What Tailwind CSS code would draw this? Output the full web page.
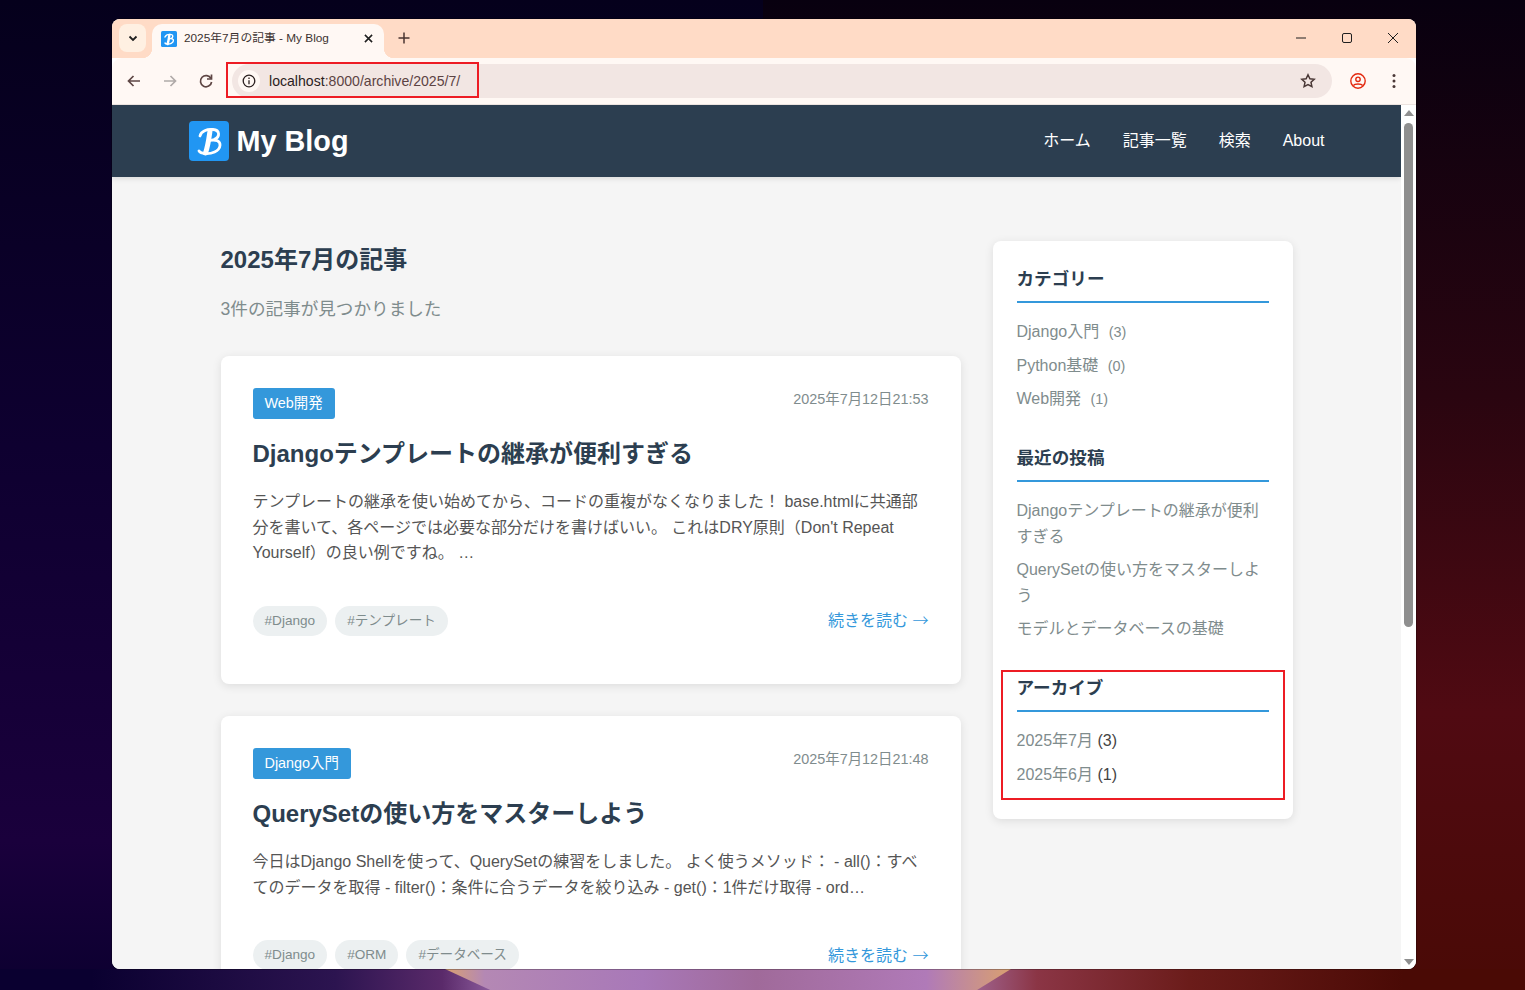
<!DOCTYPE html>
<html lang="ja">
  <head>
    <meta charset="utf-8" />
    <title>2025年7月の記事 - My Blog</title>
    <script src="https://cdn.jsdelivr.net/npm/@tailwindcss/browser@4"></script>
  </head>
  <body class="relative h-[990px] overflow-hidden bg-[#0a0020] font-['Liberation_Sans','Noto_Sans_CJK_JP',sans-serif]">
    <!-- Desktop wallpaper -->
    <div class="absolute inset-0 flex">
      <div class="w-1/2 bg-[linear-gradient(180deg,#05001c_0%,#0e0030_45%,#1a003c_85%,#0c0030_100%)]"></div>
      <div class="w-1/2 bg-[linear-gradient(180deg,#08000f_0%,#2a0510_40%,#500a12_72%,#4a0a06_100%)]"></div>
    </div>
    <div class="absolute left-0 right-0 top-[969px] h-[21px] bg-[linear-gradient(90deg,#0a0030_6%,#2c1450_22%,#5a2a6a_29%,#a878b8_34%,#a878b0_62%,#8b3545_68%,#6b1c1a_78%,#4a0a05_92%)]"></div>
    <div class="absolute left-[445px] top-[969px] h-[21px] w-[566px] bg-[linear-gradient(90deg,#d9a070_0%,#b488b4_7%,#a878b8_35%,#a06a9a_55%,#b07ab8_85%,#d9a070_100%)] [clip-path:polygon(0_0,100%_0,94%_100%,8%_100%)]"></div>

    <!-- Browser window -->
    <div class="relative ml-[112px] flex h-[969px] w-[1304px] flex-col pt-[19px]">
      <div class="flex h-[950px] flex-col overflow-hidden rounded-lg bg-white shadow-[0_0_0_1px_rgba(0,0,0,0.25)]">
        <!-- Tab strip -->
        <div class="relative flex h-[39px] shrink-0 items-end bg-[#ffdbc6] pl-[7px] text-[#1f1f1f]">
          <button class="mb-[6px] flex h-[28px] w-[27px] items-center justify-center rounded-lg bg-[#fff0e2]">
            <svg class="h-3 w-3" viewBox="0 0 12 12" fill="none" stroke="#1f1f1f" stroke-width="1.8"><path d="M2.5 4.5 6 8l3.500-3.500" /></svg>
          </button>
          <div class="relative ml-[6px] flex h-[34px] w-[232px] items-center rounded-t-[10px] bg-[#fff8f4] pb-[4px] pl-[9px]">
            <div class="absolute -left-[10px] bottom-0 h-[10px] w-[10px] bg-[radial-gradient(circle_at_0_0,transparent_10px,#fff8f4_10.5px)]"></div>
            <div class="absolute -right-[10px] bottom-0 h-[10px] w-[10px] bg-[radial-gradient(circle_at_100%_0,transparent_10px,#fff8f4_10.5px)]"></div>
            <svg class="h-4 w-4 shrink-0" viewBox="0 0 40 40">
              <rect width="40" height="40" rx="4" fill="#2196f3" />
              <path d="M10 15C12 10 18 8 24 8.500c7 .500 7.500 7.500 1 10-3 1-5 1-5 1 7-1.500 11.500.500 11 5-.500 6-9 8.500-15 8-2.500-.200-5-1-6-2.500" fill="none" stroke="#fff" stroke-width="3.600" stroke-linecap="round" />
              <path d="M21 10c-1 7-2 15-4.500 22.500" fill="none" stroke="#fff" stroke-width="6" stroke-linecap="round" />
            </svg>
            <span class="ml-[7px] whitespace-nowrap text-[11.8px] text-[#3c3230]">2025年7月の記事 - My Blog</span>
            <svg class="absolute right-[11px] top-[10px] h-[9px] w-[9px]" viewBox="0 0 10 10" stroke="#1f1f1f" stroke-width="1.7"><path d="M1 1l8 8M9 1 1 9" /></svg>
          </div>
          <svg class="mb-[14px] ml-[14px] h-3 w-3" viewBox="0 0 12 12" stroke="#4a3530" stroke-width="1.5"><path d="M6 .5v11M.5 6h11" /></svg>
          <!-- Window controls -->
          <div class="absolute right-[18px] top-[14px] flex items-center gap-[36px]">
            <svg class="h-[10px] w-[10px]" viewBox="0 0 10 10" stroke="#1f1f1f"><path d="M0 5h10" /></svg>
            <svg class="h-[10px] w-[10px]" viewBox="0 0 10 10" fill="none" stroke="#1f1f1f"><rect x=".5" y=".5" width="9" height="9" rx="1.500" /></svg>
            <svg class="h-[10px] w-[10px]" viewBox="0 0 10 10" stroke="#1f1f1f"><path d="M0 0l10 10M10 0 0 10" /></svg>
          </div>
        </div>

        <!-- Toolbar -->
        <div class="relative z-10 flex h-[47px] shrink-0 items-center rounded-t-[10px] border-b border-[#ece3df] bg-[#fff8f4] px-[14px]">
          <svg class="h-4 w-4" viewBox="0 0 16 16" fill="none" stroke="#5e4644" stroke-width="1.700"><path d="M14 8H2.500M7.500 3 2.500 8l5 5" /></svg>
          <svg class="ml-5 h-4 w-4" viewBox="0 0 16 16" fill="none" stroke="#b0aaa8" stroke-width="1.700"><path d="M2 8h11.500M8.500 3l5 5-5 5" /></svg>
          <svg class="ml-5 h-4 w-4" viewBox="0 0 16 16" fill="none" stroke="#5e4644" stroke-width="1.700"><path d="M13 5.500A5.600 5.600 0 1 0 13.600 9" /><path d="M13.500 1.500v4.500H9" /></svg>
          <div class="ml-[18px] flex h-[34px] w-[1100px] items-center rounded-full bg-[#f2e6e3] pl-[6px] text-[14.1px]">
            <div class="flex h-[22px] w-[22px] items-center justify-center rounded-full bg-[#fff8f4]">
              <svg class="h-[14px] w-[14px]" viewBox="0 0 14 14" fill="none" stroke="#2a2020" stroke-width="1.300"><circle cx="7" cy="7" r="5.800" /><path d="M7 6.200v4M7 3.600v1.400" /></svg>
            </div>
            <span class="ml-[9px] pt-[2px] text-[#2b1d1d]">localhost</span><span class="pt-[2px] text-[#5c4343]">:8000/archive/2025/7/</span>
            <svg class="ml-auto mr-[16px] h-4 w-4" viewBox="0 0 16 16" fill="none" stroke="#4a3836" stroke-width="1.500"><path d="m8 1.800 1.900 4 4.300.5-3.200 3 .900 4.300L8 11.500l-3.900 2.100.900-4.300-3.200-3 4.300-.5z" /></svg>
          </div>
          <svg class="ml-[18px] h-4 w-4" viewBox="0 0 16 16" fill="none" stroke="#e3290f" stroke-width="1.400"><circle cx="8" cy="8" r="7.200" /><circle cx="8" cy="6.300" r="2.200" /><path d="M3.300 12.500c1.500-2 8-2 9.400 0" /></svg>
          <svg class="ml-[26px] h-4 w-1" viewBox="0 0 4 16" fill="#4a3836"><circle cx="2" cy="2.500" r="1.500" /><circle cx="2" cy="8" r="1.500" /><circle cx="2" cy="13.500" r="1.500" /></svg>
          <!-- Red annotation on the URL -->
          <div class="absolute left-[114px] top-[4px] h-[36px] w-[253px] border-2 border-[#ed1c24]"></div>
        </div>

        <!-- Viewport -->
        <div class="flex min-h-0 flex-1">
          <div class="min-w-0 flex-1 overflow-hidden bg-[#f5f5f5] text-base leading-[1.6]">
            <header class="h-[72px] bg-[#2c3e50] shadow-[0_2px_5px_rgba(0,0,0,0.1)]">
              <div class="mx-auto flex h-full w-[1136px] items-center justify-between">
                <a class="flex items-center gap-2 text-[28.8px] font-bold text-white">
                  <svg class="h-10 w-10" viewBox="0 0 40 40">
                    <rect width="40" height="40" rx="4" fill="#2196f3" />
                    <path d="M11 15C12 10 18 8 24 8.500c7 .500 7.500 7.500 1 10-3 1-5 1-5 1 7-1.500 11.500.500 11 5-.500 6-9 8.500-15 8-2.500-.200-5-1-6-2.500" fill="none" stroke="#fff" stroke-width="2.800" stroke-linecap="round" />
                    <path d="M21 10c-1 7-2 15-4.500 22" fill="none" stroke="#fff" stroke-width="5" stroke-linecap="round" />
                  </svg>
                  My Blog
                </a>
                <nav class="flex gap-8 text-white">
                  <a>ホーム</a>
                  <a>記事一覧</a>
                  <a>検索</a>
                  <a>About</a>
                </nav>
              </div>
            </header>

            <main class="mx-auto flex w-[1072px] gap-8 pt-16">
              <div class="w-[740px] shrink-0">
                <h1 class="text-[24px] font-bold text-[#2c3e50]">2025年7月の記事</h1>
                <p class="mb-8 mt-4 text-[17.6px] text-[#7f8c8d]">3件の記事が見つかりました</p>

                <article class="mb-8 rounded-lg bg-white p-8 shadow-[0_2px_10px_rgba(0,0,0,0.1)]">
                  <div class="flex items-start justify-between">
                    <span class="rounded-[3px] bg-[#3498db] px-3 py-1 text-[14.4px] text-white">Web開発</span>
                    <span class="text-[14.4px] text-[#7f8c8d]">2025年7月12日21:53</span>
                  </div>
                  <h2 class="mt-4 text-[24px] font-bold text-[#2c3e50]">Djangoテンプレートの継承が便利すぎる</h2>
                  <p class="mb-10 mt-4 text-[#555]">テンプレートの継承を使い始めてから、コードの重複がなくなりました！ base.htmlに共通部分を書いて、各ページでは必要な部分だけを書けばいい。 これはDRY原則（Don't Repeat Yourself）の良い例ですね。 …</p>
                  <div class="mb-4 flex items-center justify-between">
                    <div class="flex gap-2 text-[13.6px] text-[#7f8c8d]">
                      <span class="rounded-full bg-[#ecf0f1] px-3 py-1">#Django</span>
                      <span class="rounded-full bg-[#ecf0f1] px-3 py-1">#テンプレート</span>
                    </div>
                    <a class="text-[#3498db]">続きを読む <span class="font-['Noto_Sans_CJK_JP'] font-light">→</span></a>
                  </div>
                </article>

                <article class="rounded-lg bg-white p-8 shadow-[0_2px_10px_rgba(0,0,0,0.1)]">
                  <div class="flex items-start justify-between">
                    <span class="rounded-[3px] bg-[#3498db] px-3 py-1 text-[14.4px] text-white">Django入門</span>
                    <span class="text-[14.4px] text-[#7f8c8d]">2025年7月12日21:48</span>
                  </div>
                  <h2 class="mt-4 text-[24px] font-bold text-[#2c3e50]">QuerySetの使い方をマスターしよう</h2>
                  <p class="mb-10 mt-4 text-[#555]">今日はDjango Shellを使って、QuerySetの練習をしました。 よく使うメソッド： - all()：すべてのデータを取得 - filter()：条件に合うデータを絞り込み - get()：1件だけ取得 - ord…</p>
                  <div class="mb-4 flex items-center justify-between">
                    <div class="flex gap-2 text-[13.6px] text-[#7f8c8d]">
                      <span class="rounded-full bg-[#ecf0f1] px-3 py-1">#Django</span>
                      <span class="rounded-full bg-[#ecf0f1] px-3 py-1">#ORM</span>
                      <span class="rounded-full bg-[#ecf0f1] px-3 py-1">#データベース</span>
                    </div>
                    <a class="text-[#3498db]">続きを読む <span class="font-['Noto_Sans_CJK_JP'] font-light">→</span></a>
                  </div>
                </article>
              </div>

              <!-- Sidebar -->
              <aside class="relative h-fit w-[300px] shrink-0 rounded-lg bg-white p-6 shadow-[0_2px_10px_rgba(0,0,0,0.1)]">
                <section class="mb-8">
                  <h3 class="mb-4 border-b-2 border-[#3498db] pb-2 text-[17.6px] font-bold text-[#2c3e50]">カテゴリー</h3>
                  <ul class="text-[#7f8c8d]">
                    <li class="mb-2">Django入門 <span class="ml-[5px] text-[14.4px]">(3)</span></li>
                    <li class="mb-2">Python基礎 <span class="ml-[5px] text-[14.4px]">(0)</span></li>
                    <li class="mb-2">Web開発 <span class="ml-[5px] text-[14.4px]">(1)</span></li>
                  </ul>
                </section>
                <section class="mb-8">
                  <h3 class="mb-4 border-b-2 border-[#3498db] pb-2 text-[17.6px] font-bold text-[#2c3e50]">最近の投稿</h3>
                  <ul class="text-[#7f8c8d]">
                    <li class="mb-2">Djangoテンプレートの継承が便利すぎる</li>
                    <li class="mb-2">QuerySetの使い方をマスターしよう</li>
                    <li class="mb-2">モデルとデータベースの基礎</li>
                  </ul>
                </section>
                <section>
                  <h3 class="mb-4 border-b-2 border-[#3498db] pb-2 text-[17.6px] font-bold text-[#2c3e50]">アーカイブ</h3>
                  <ul class="text-[#7f8c8d]">
                    <li class="mb-2">2025年7月 <span class="text-[#444]">(3)</span></li>
                    <li class="mb-2">2025年6月 <span class="text-[#444]">(1)</span></li>
                  </ul>
                </section>
                <!-- Red annotation on the archive block -->
                <div class="absolute left-2 top-[429px] h-[130px] w-[284px] border-2 border-[#ed1c24]"></div>
              </aside>
            </main>
          </div>

          <!-- Scrollbar -->
          <div class="flex w-[15px] shrink-0 flex-col items-center bg-white">
            <svg class="mt-[5px] h-[6px] w-[10px]" viewBox="0 0 10 6" fill="#8f8f8f"><path d="M5 0l5 6H0z" /></svg>
            <div class="mt-[7px] h-[504px] w-[9px] rounded-[5px] bg-[#8f8f8f]"></div>
            <svg class="mb-[4px] mt-auto h-[6px] w-[10px]" viewBox="0 0 10 6" fill="#8f8f8f"><path d="M5 6 10 0H0z" /></svg>
          </div>
        </div>
      </div>
    </div>
  </body>
</html>
